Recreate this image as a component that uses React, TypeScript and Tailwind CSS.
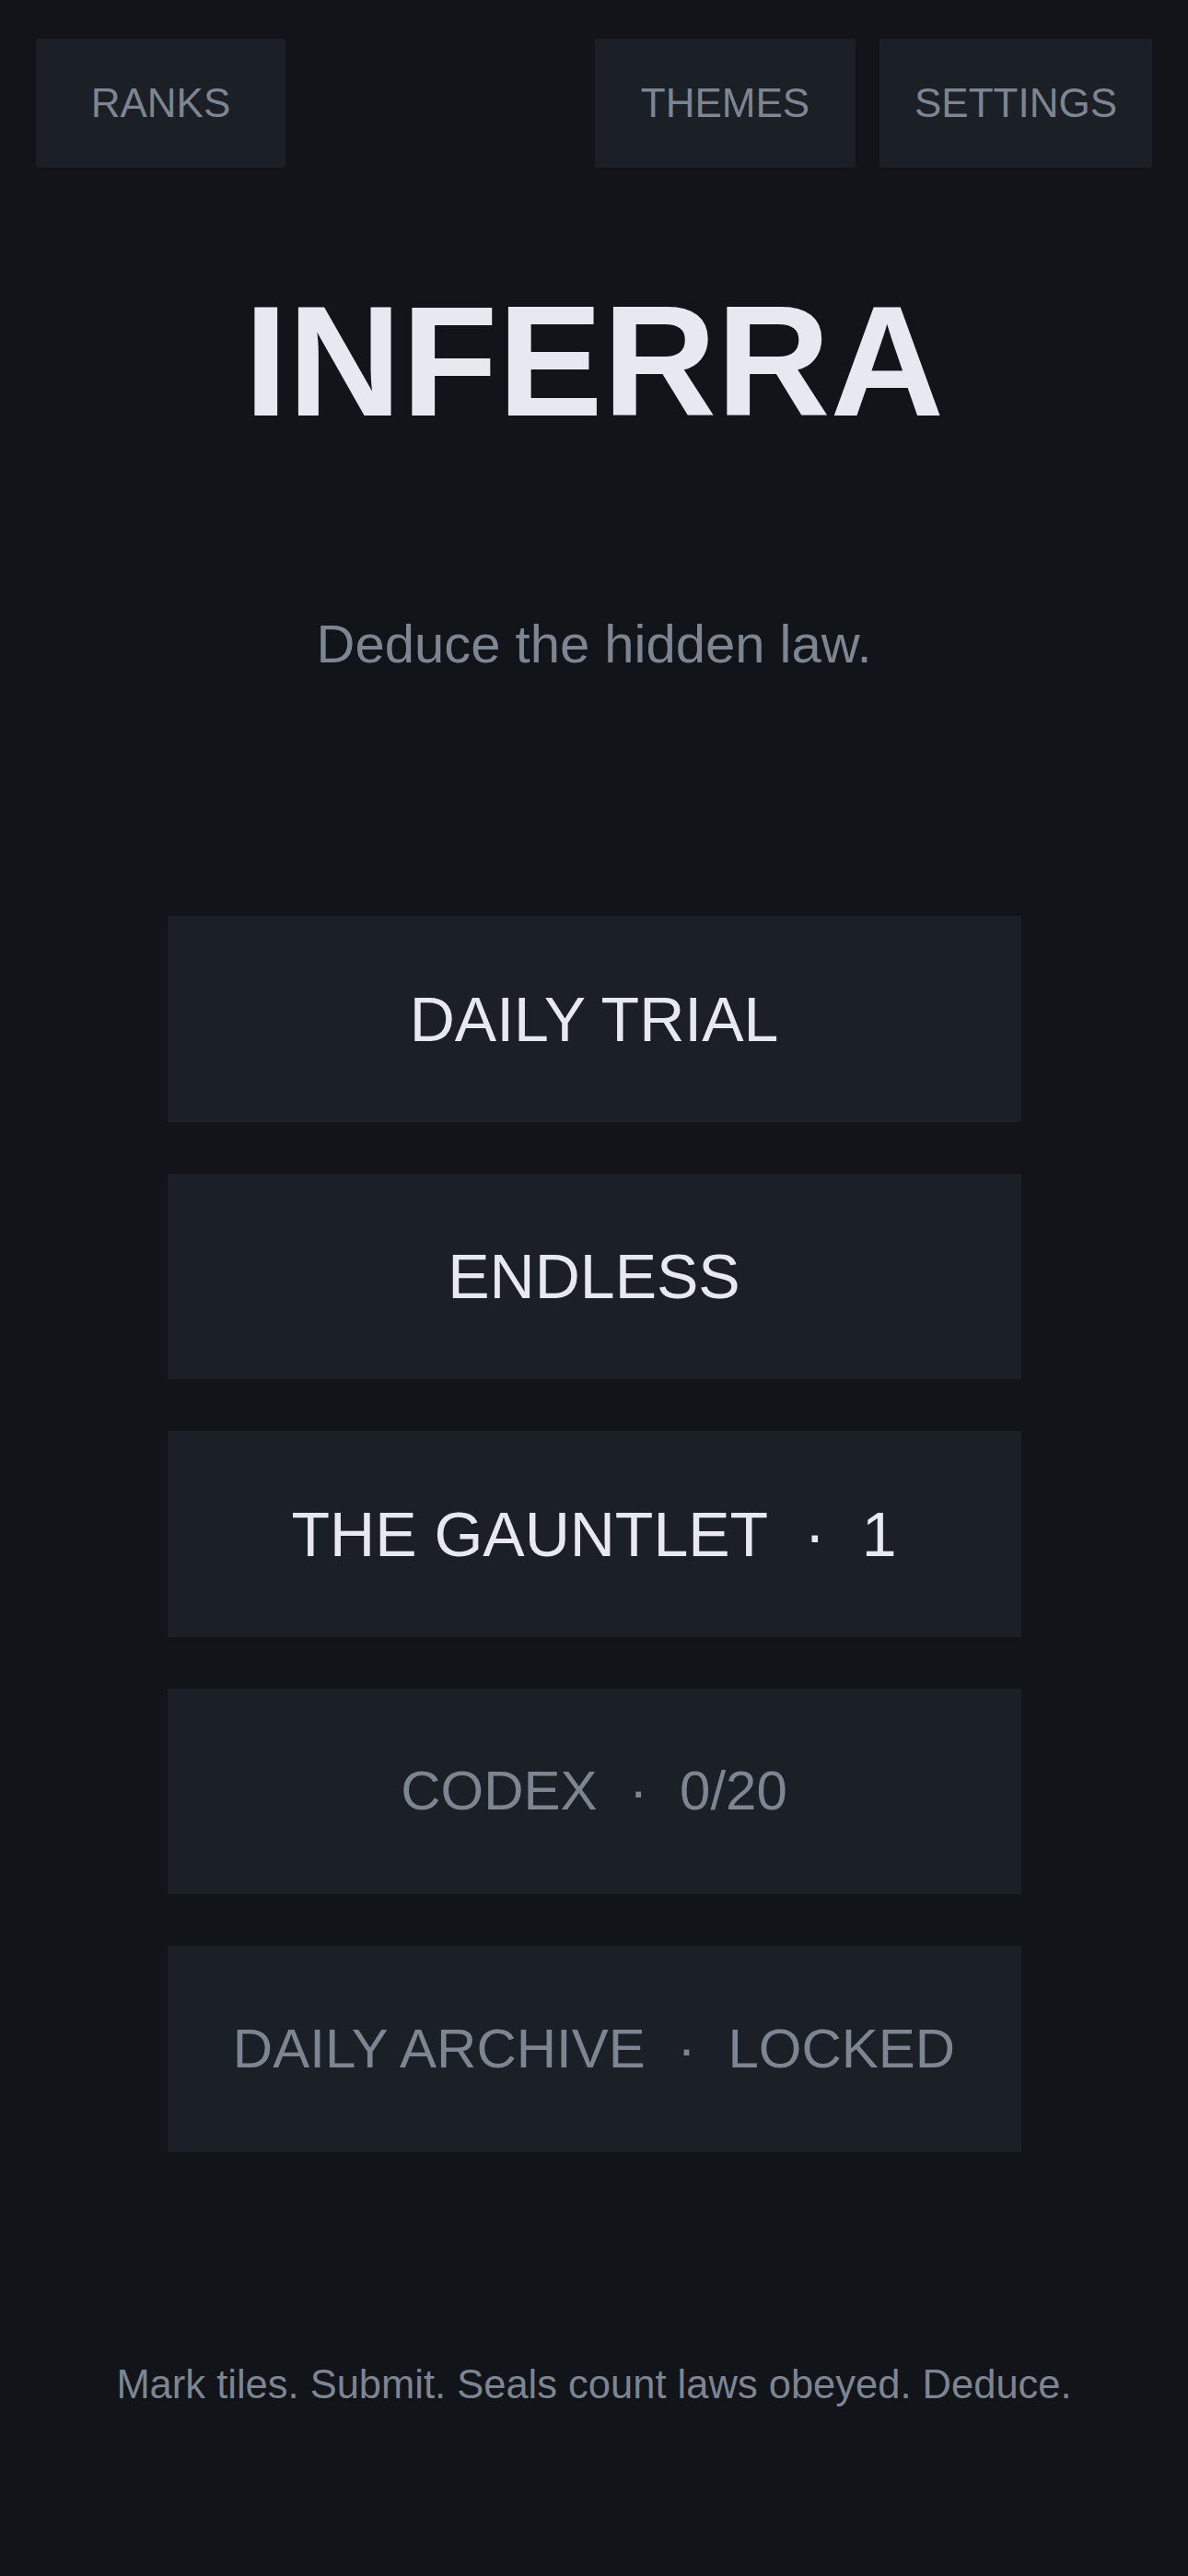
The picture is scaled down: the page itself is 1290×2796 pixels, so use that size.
const topLeft = [{ label: 'RANKS', width: 'w-[271px]' }];
const topRight = [
  { label: 'THEMES', width: 'w-[283px]' },
  { label: 'SETTINGS', width: 'w-[296px]' },
];

type Mode = { name: string; value?: string; muted?: boolean };

const modes: Mode[] = [
  { name: 'DAILY TRIAL' },
  { name: 'ENDLESS' },
  { name: 'THE GAUNTLET', value: '1' },
  { name: 'CODEX', value: '0/20', muted: true },
  { name: 'DAILY ARCHIVE', value: 'LOCKED', muted: true },
];

const TopButton = ({ label, width }: { label: string; width: string }) => (
  <button
    className={`${width} h-[140px] flex items-center justify-center rounded-[3px] bg-[#1b1f26] text-[44px] leading-none text-[#7d8590]`}
  >
    {label}
  </button>
);

export default function App() {
  return (
    <div className="min-h-screen bg-[#111418] font-['Liberation_Sans',Arial,sans-serif]">
      {/* top bar */}
      <header className="flex justify-between px-[39px] pt-[42px]">
        <div className="flex gap-[26px]">
          {topLeft.map((b) => (
            <TopButton key={b.label} {...b} />
          ))}
        </div>
        <div className="flex gap-[26px]">
          {topRight.map((b) => (
            <TopButton key={b.label} {...b} />
          ))}
        </div>
      </header>

      {/* title */}
      <h1 className="mt-[124px] text-center text-[171px] font-bold leading-none text-[#e6eaf0]">
        INFERRA
      </h1>
      <p className="mt-[193px] text-center text-[58px] leading-none text-[#7d8590]">
        Deduce the hidden law.
      </p>

      {/* modes */}
      <div className="mt-[266px] flex flex-col items-center gap-[56px]">
        {modes.map((m) => (
          <button
            key={m.name}
            className={`w-[927px] h-[223.5px] flex items-center justify-center gap-[0.58em] bg-[#1b1f26] leading-none ${
              m.muted ? 'text-[60px] text-[#7d8590]' : 'text-[68px] text-[#e6eaf0]'
            }`}
          >
            <span>{m.name}</span>
            {m.value && (
              <>
                <span>·</span>
                <span>{m.value}</span>
              </>
            )}
          </button>
        ))}
      </div>

      {/* footer hint */}
      <p className="mt-[231px] pb-[150px] text-center text-[43.5px] leading-none text-[#7d8590]">
        Mark tiles. Submit. Seals count laws obeyed. Deduce.
      </p>
    </div>
  );
}
